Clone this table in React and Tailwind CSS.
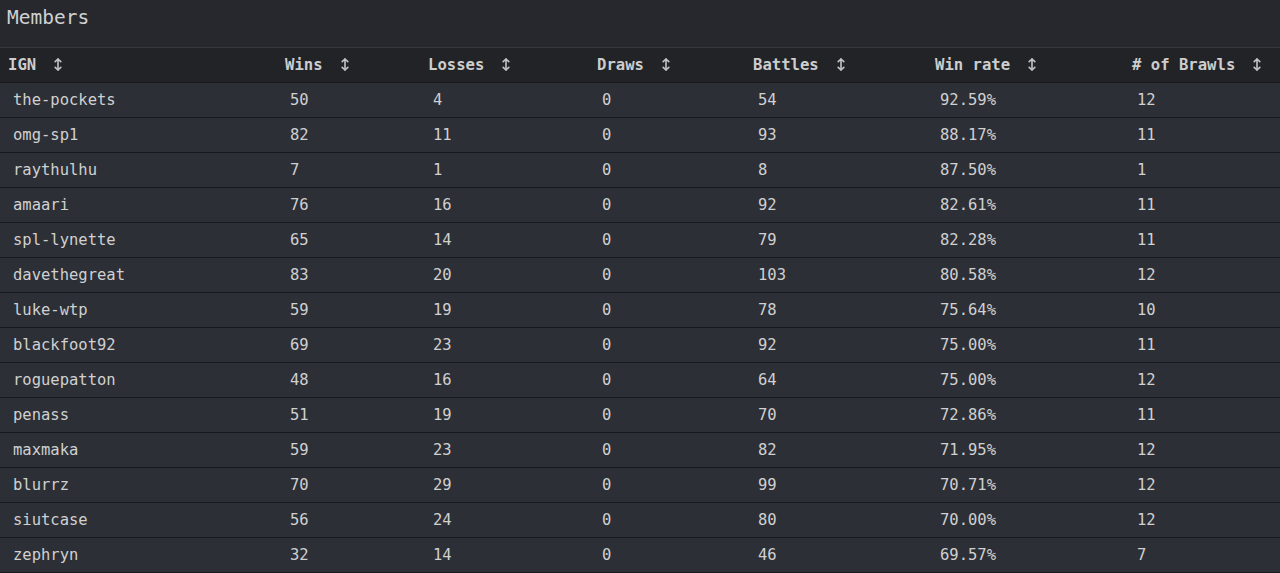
import { useState } from 'react';

const columns = [
  { key: 'ign', label: 'IGN', width: 'w-[277px]' },
  { key: 'wins', label: 'Wins', width: 'w-[143px]' },
  { key: 'losses', label: 'Losses', width: 'w-[169px]' },
  { key: 'draws', label: 'Draws', width: 'w-[156px]' },
  { key: 'battles', label: 'Battles', width: 'w-[182px]' },
  { key: 'rate', label: 'Win rate', width: 'w-[197px]' },
  { key: 'brawls', label: '# of Brawls', width: 'w-[156px]' },
];

const members = [
  ['the-pockets', 50, 4, 0, 54, '92.59%', 12],
  ['omg-sp1', 82, 11, 0, 93, '88.17%', 11],
  ['raythulhu', 7, 1, 0, 8, '87.50%', 1],
  ['amaari', 76, 16, 0, 92, '82.61%', 11],
  ['spl-lynette', 65, 14, 0, 79, '82.28%', 11],
  ['davethegreat', 83, 20, 0, 103, '80.58%', 12],
  ['luke-wtp', 59, 19, 0, 78, '75.64%', 10],
  ['blackfoot92', 69, 23, 0, 92, '75.00%', 11],
  ['roguepatton', 48, 16, 0, 64, '75.00%', 12],
  ['penass', 51, 19, 0, 70, '72.86%', 11],
  ['maxmaka', 59, 23, 0, 82, '71.95%', 12],
  ['blurrz', 70, 29, 0, 99, '70.71%', 12],
  ['siutcase', 56, 24, 0, 80, '70.00%', 12],
  ['zephryn', 32, 14, 0, 46, '69.57%', 7],
];

function SortIcon() {
  return (
    <svg width="8" height="13" viewBox="0 0 8 13" className="inline-block ml-[18px] align-[-1px]" fill="none" stroke="#c4c4c4" strokeWidth="1.6" strokeLinecap="round" strokeLinejoin="round">
      <path d="M4 1v11" />
      <path d="M1.2 3.6L4 1l2.8 2.6" />
      <path d="M1.2 9.4L4 12l2.8-2.6" />
    </svg>
  );
}

export default function App() {
  const [sortKey, setSortKey] = useState(null);

  return (
    <div
      className="min-h-screen bg-[#26282d] text-[#d2d2d2]"
      style={{ fontFamily: '"DejaVu Sans Mono", "Liberation Mono", monospace' }}
    >
      <div className="h-[47px] px-[7px] pt-[4px] text-[19.5px] leading-[28px] text-[#cfd0d2]">Members</div>
      <table className="w-full table-fixed border-collapse border-t border-[#35373c]">
        <colgroup>
          {columns.map(c => <col key={c.key} className={c.width} />)}
        </colgroup>
        <thead>
          <tr className="h-[35px] bg-[#222327] border-b border-[#17181b]">
            {columns.map(c => (
              <th
                key={c.key}
                onClick={() => setSortKey(c.key)}
                className="pl-[8px] pt-[2px] text-left text-[15.6px] font-bold text-[#cdcdcd] whitespace-nowrap cursor-pointer"
              >
                {c.label}
                <SortIcon />
              </th>
            ))}
          </tr>
        </thead>
        <tbody>
          {members.map(row => (
            <tr key={row[0]} className="h-[35px] bg-[#2c2f36] border-b border-[#17191c]">
              {row.map((v, i) => (
                <td key={i} className="pl-[13px] pt-[1px] text-[15.5px] text-[#d0d0d0] whitespace-nowrap">{v}</td>
              ))}
            </tr>
          ))}
        </tbody>
      </table>
    </div>
  );
}
